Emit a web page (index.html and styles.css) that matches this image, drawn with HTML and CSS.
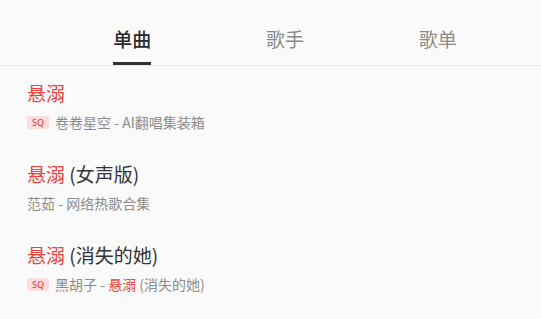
FILE: index.html
```html
<!DOCTYPE html>
<html lang="zh">
<head>
<meta charset="utf-8">
<link rel="stylesheet" href="styles.css">
</head>
<body>
<div class="page">
  <nav class="tabs">
    <div class="tab active"><span class="label">单曲</span></div>
    <div class="tab"><span class="label">歌手</span></div>
    <div class="tab"><span class="label">歌单</span></div>
  </nav>
  <ul class="list">
    <li class="row">
      <div class="title"><span class="hl">悬溺</span></div>
      <div class="sub"><span class="badge">SQ</span>卷卷星空 - AI翻唱集装箱</div>
    </li>
    <li class="row">
      <div class="title"><span class="hl">悬溺</span> (女声版)</div>
      <div class="sub">范茹 - 网络热歌合集</div>
    </li>
    <li class="row">
      <div class="title"><span class="hl">悬溺</span> (消失的她)</div>
      <div class="sub"><span class="badge">SQ</span>黑胡子 - <span class="hl">悬溺</span> (消失的她)</div>
    </li>
  </ul>
</div>
</body>
</html>
```

FILE: styles.css
```css
html, body {
  margin: 0;
  padding: 0;
  background: #fafafa;
}
body {
  font-family: "Noto Sans CJK SC", "Noto Sans", sans-serif;
  color: #333;
}
.page {
  width: 541px;
  height: 319px;
  overflow: hidden;
  background: #fafafa;
}
.tabs {
  display: flex;
  height: 65px;
  padding: 0 27px 0 56px;
  border-bottom: 1px solid #e9e9e9;
}
.tab {
  flex: 1;
  display: flex;
  justify-content: center;
  align-items: flex-end;
}
.label {
  display: inline-block;
  font-size: 19px;
  line-height: 26px;
  padding-bottom: 10px;
  border-bottom: 3px solid transparent;
  color: #8a8a8a;
}
.tab.active .label {
  color: #2b2b2b;
  font-weight: 500;
  border-bottom-color: #333;
}
.list {
  list-style: none;
  margin: 0;
  padding: 0;
}
.row {
  padding: 14px 27px 15px;
}
.title {
  font-size: 19px;
  line-height: 26px;
  color: #333;
}
.hl {
  color: #e8433d;
}
.sub {
  margin-top: 6px;
  font-size: 14px;
  line-height: 20px;
  color: #8c8c8c;
  display: flex;
  align-items: center;
  white-space: pre;
}
.sub .hl {
  color: #e8433d;
}
.badge {
  display: inline-flex;
  align-items: center;
  justify-content: center;
  width: 22px;
  height: 13px;
  margin-right: 6px;
  border-radius: 2px;
  background: #fcdede;
  color: #e8433d;
  font-family: "Noto Sans", sans-serif;
  font-size: 9px;
  font-weight: 500;
  line-height: 13px;
}
```
